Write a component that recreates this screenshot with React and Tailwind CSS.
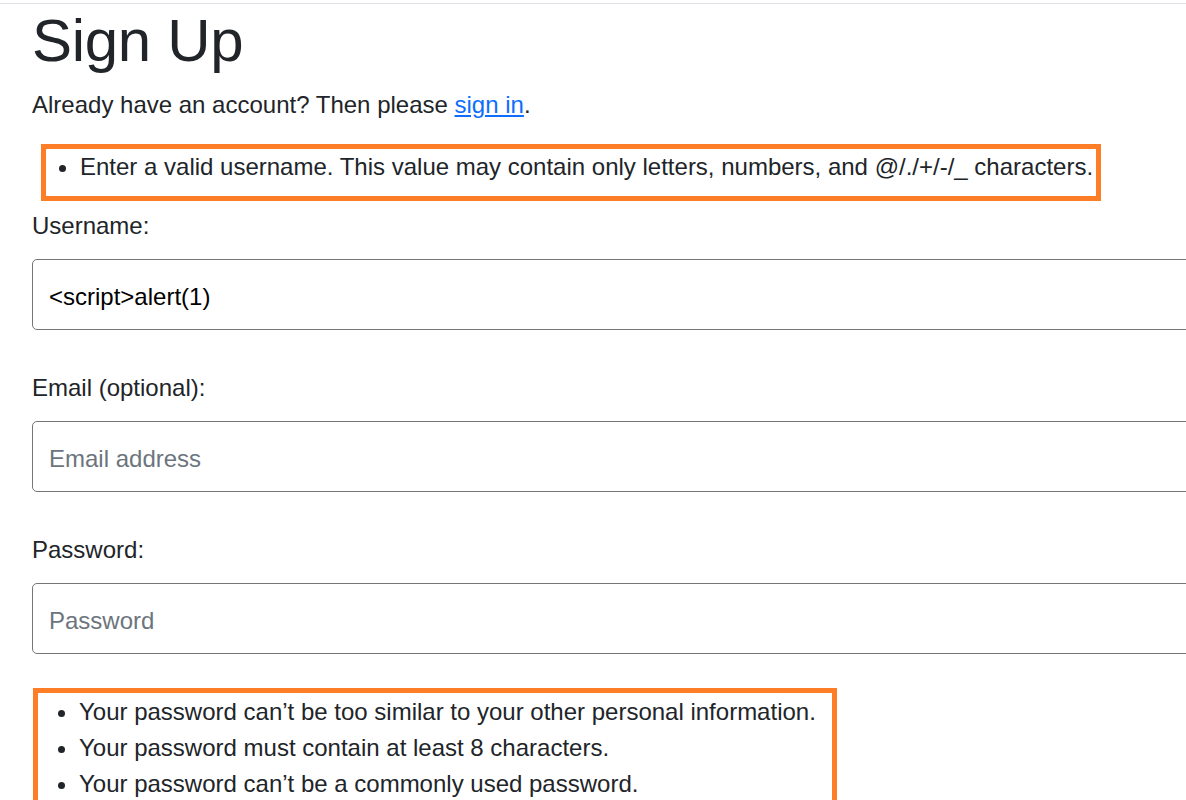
export default function App() {
  const font = { fontFamily: '"Liberation Sans", Arial, sans-serif' };
  return (
    <div className="w-[1186px] h-[800px] overflow-hidden bg-white text-[#212529]" style={font}>
      <div className="h-[3px]" />
      <div className="border-t border-[#dee2e6] pl-[32px] pt-[1px]">
        <h1 className="text-[60px] leading-[72px] font-normal tracking-[-0.3px]">Sign Up</h1>
        <p className="text-[24px] leading-[36px] mt-[10px]">
          Already have an account? Then please{" "}
          <a href="#" className="text-[#0d6efd] underline">sign in</a>.
        </p>
        <div className="mt-[21px] ml-[9px] w-[1060px] border-[5px] border-[#fd7e27] pb-[11px]">
          <ul className="list-disc pl-[34px] text-[24px] leading-[36px]">
            <li>Enter a valid username. This value may contain only letters, numbers, and @/./+/-/_ characters.</li>
          </ul>
        </div>
        <form className="mt-[7px] flex flex-col">
          <label className="text-[24px] leading-[36px]">Username:</label>
          <input
            defaultValue="<script>alert(1)"
            className="mt-[15px] w-[1200px] h-[71px] rounded-[5px] border border-[#767676] pl-[16px] pt-[5px] text-[24px] text-black outline-none"
            style={font}
          />
          <label className="mt-[40px] text-[24px] leading-[36px]">Email (optional):</label>
          <input
            placeholder="Email address"
            className="mt-[15px] w-[1200px] h-[71px] rounded-[5px] border border-[#767676] pl-[16px] pt-[5px] text-[24px] placeholder:text-[#6c757d] outline-none"
            style={font}
          />
          <label className="mt-[40px] text-[24px] leading-[36px]">Password:</label>
          <input
            type="password"
            placeholder="Password"
            className="mt-[15px] w-[1200px] h-[71px] rounded-[5px] border border-[#767676] pl-[16px] pt-[5px] text-[24px] placeholder:text-[#6c757d] outline-none"
            style={font}
          />
        </form>
        <div className="mt-[34px] ml-[1px] w-[804px] border-[5px] border-[#fd7e27] pt-[1px]">
          <ul className="list-disc pl-[41px] text-[24px] leading-[36px]">
            <li>Your password can’t be too similar to your other personal information.</li>
            <li>Your password must contain at least 8 characters.</li>
            <li>Your password can’t be a commonly used password.</li>
          </ul>
        </div>
      </div>
    </div>
  );
}
